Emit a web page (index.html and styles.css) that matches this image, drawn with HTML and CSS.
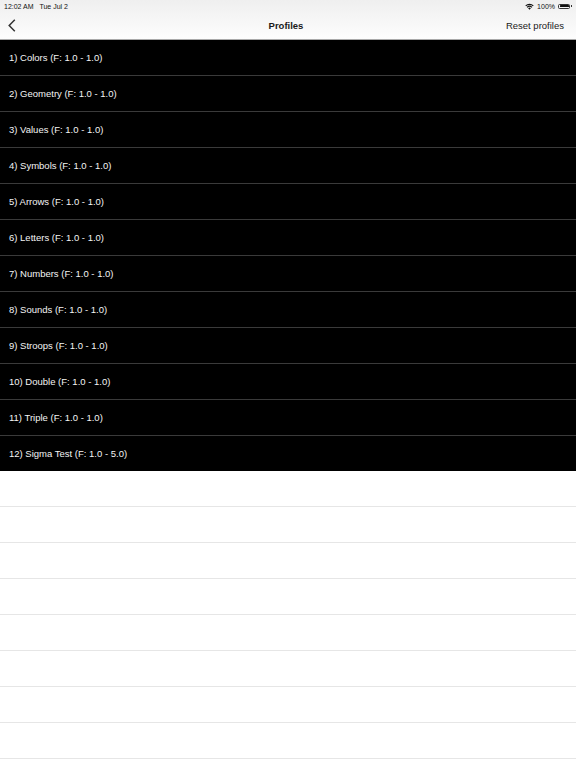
FILE: index.html
```html
<!DOCTYPE html>
<html>
<head>
<meta charset="utf-8">
<link rel="stylesheet" href="styles.css">
</head>
<body>
<header class="top">
  <div class="status">
    <span class="time">12:02 AM&nbsp;&nbsp;&nbsp;Tue Jul 2</span>
    <span class="status-right">
      <svg class="wifi" width="9" height="7" viewBox="0 0 18 14"><path d="M9 13.5 L6.2 10.6 A4 4 0 0 1 11.8 10.6 Z" fill="#111"/><path d="M3.4 7.8 A8 8 0 0 1 14.6 7.8 L13 9.4 A5.7 5.7 0 0 0 5 9.4 Z" fill="#111"/><path d="M0.6 5 A12 12 0 0 1 17.4 5 L15.8 6.6 A9.7 9.7 0 0 0 2.2 6.6 Z" fill="#111"/></svg>
      <span class="pct">100%</span>
      <span class="battery"><span class="battery-fill"></span></span><span class="battery-tip"></span>
    </span>
  </div>
  <nav class="navbar">
    <span class="back"><svg width="8" height="13" viewBox="0 0 8 13"><path d="M6.8 0.8 L1.2 6.5 L6.8 12.2" fill="none" stroke="#333" stroke-width="1.5"/></svg></span>
    <span class="title">Profiles</span>
    <span class="reset">Reset profiles</span>
  </nav>
</header>
<ul class="list">
  <li>1) Colors (F: 1.0 - 1.0)</li>
  <li>2) Geometry (F: 1.0 - 1.0)</li>
  <li>3) Values (F: 1.0 - 1.0)</li>
  <li>4) Symbols (F: 1.0 - 1.0)</li>
  <li>5) Arrows (F: 1.0 - 1.0)</li>
  <li>6) Letters (F: 1.0 - 1.0)</li>
  <li>7) Numbers (F: 1.0 - 1.0)</li>
  <li>8) Sounds (F: 1.0 - 1.0)</li>
  <li>9) Stroops (F: 1.0 - 1.0)</li>
  <li>10) Double (F: 1.0 - 1.0)</li>
  <li>11) Triple (F: 1.0 - 1.0)</li>
  <li class="last">12) Sigma Test (F: 1.0 - 5.0)</li>
</ul>
<div class="empty">
  <div class="erow"></div>
  <div class="erow"></div>
  <div class="erow"></div>
  <div class="erow"></div>
  <div class="erow"></div>
  <div class="erow"></div>
  <div class="erow"></div>
  <div class="erow"></div>
</div>
</body>
</html>
```
FILE: styles.css
```css
html, body {
  margin: 0;
  padding: 0;
  background: #fff;
  font-family: "Liberation Sans", Arial, sans-serif;
  color: #000;
  width: 576px;
  height: 768px;
  overflow: hidden;
}
.top {
  height: 39px;
  border-bottom: 1px solid #a9a9a9;
  background: linear-gradient(#efefef, #fdfdfd);
  display: flex;
  flex-direction: column;
}
.status {
  height: 11px;
  display: flex;
  justify-content: space-between;
  align-items: center;
  padding: 0 4px 0 4px;
  font-size: 7px;
  color: #111;
}
.time { padding-top: 1px; }
.status-right {
  display: flex;
  align-items: center;
  gap: 2px;
  padding-top: 1px;
}
.pct { margin-left: 1px; }
.battery {
  width: 12px;
  height: 5px;
  border: 0.5px solid #333;
  border-radius: 1.5px;
  padding: 0.5px;
  box-sizing: border-box;
  display: flex;
  margin-left: 1px;
}
.battery-fill { flex: 1; background: #111; border-radius: 0.5px; }
.battery-tip {
  width: 1px;
  height: 2px;
  background: #333;
  margin-left: -1px;
}
.navbar {
  flex: 1;
  display: grid;
  grid-template-columns: 1fr auto 1fr;
  align-items: center;
  padding: 0 12px 0 8px;
  font-size: 9.5px;
}
.back { display: flex; align-items: center; }
.title { font-weight: bold; font-size: 9.5px; color: #1a1a1a; }
.reset { justify-self: end; color: #1a1a1a; }
.list {
  list-style: none;
  margin: 0;
  padding: 0;
  background: #000;
}
.list li {
  height: 35px;
  border-bottom: 1px solid #3a3a3a;
  color: #f4f4f4;
  font-size: 9.5px;
  display: flex;
  align-items: center;
  padding-left: 9px;
}
.list li.last { border-bottom: none; }
.erow {
  height: 35px;
  border-bottom: 1px solid #e6e6e6;
}
```
